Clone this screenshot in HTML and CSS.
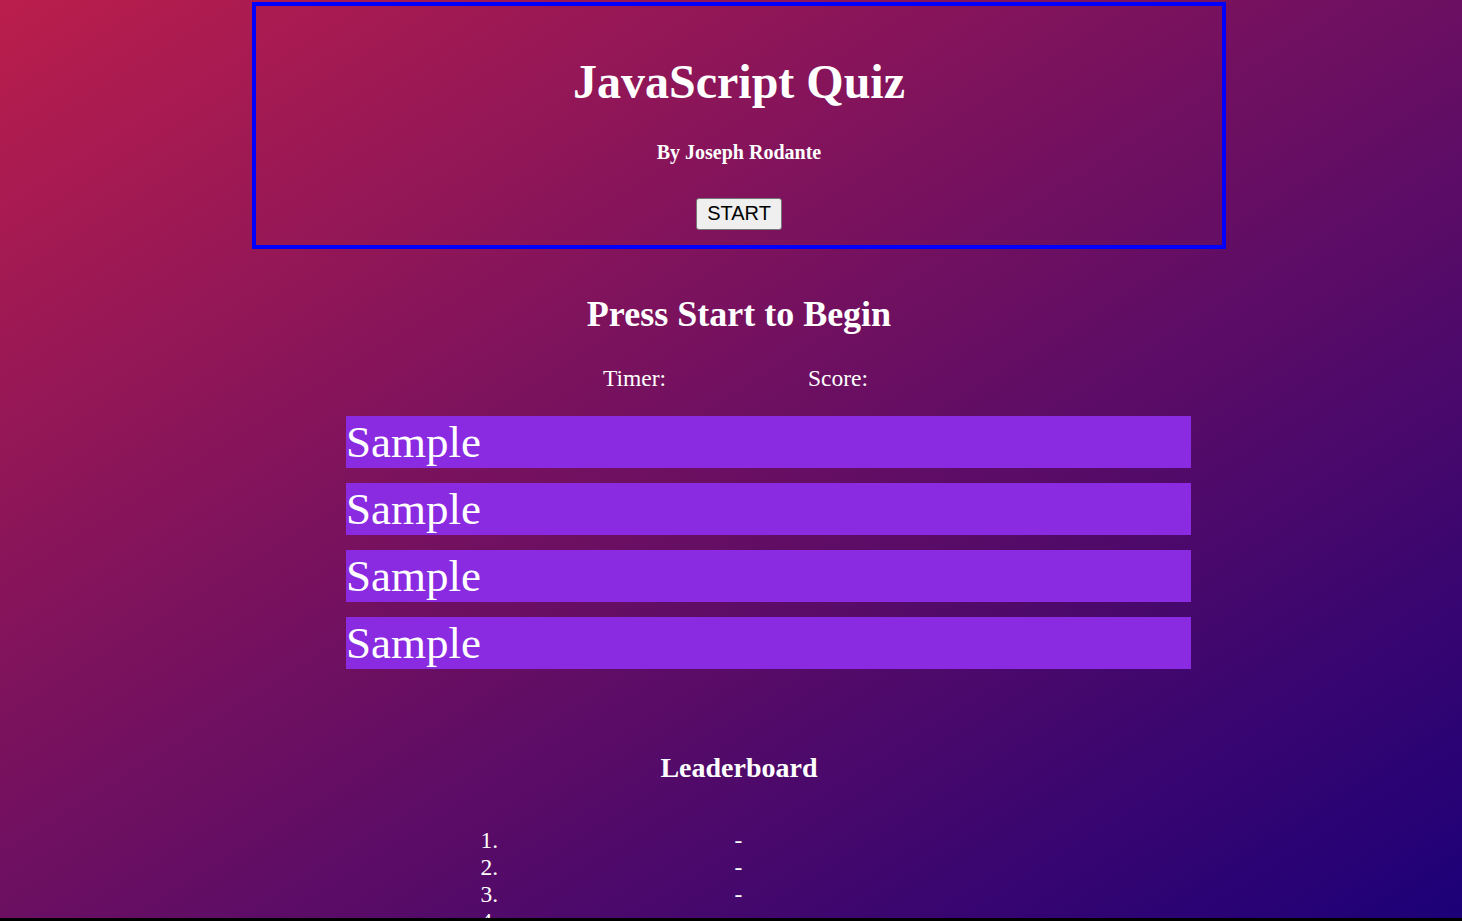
FILE: index.html
```html
<!DOCTYPE html>
<html lang="en">
<head>
<meta charset="utf-8">
<title>JavaScript Quiz</title>
<link rel="stylesheet" href="styles.css">
</head>
<body>
<div class="page">
  <header class="hero">
    <h1 class="hero-title">JavaScript Quiz</h1>
    <h4 class="hero-author">By Joseph Rodante</h4>
    <button class="start-btn" type="button">START</button>
  </header>

  <main class="quiz">
    <h2 class="quiz-question">Press Start to Begin</h2>
    <div class="stats">
      <span class="stat">Timer: <span class="stat-value"></span></span>
      <span class="stat">Score: <span class="stat-value"></span></span>
    </div>
    <div class="answers">
      <div class="answer">Sample</div>
      <div class="answer">Sample</div>
      <div class="answer">Sample</div>
      <div class="answer">Sample</div>
    </div>
  </main>

  <section class="board">
    <h3 class="board-title">Leaderboard</h3>
    <ol class="board-list">
      <li class="board-item"><span class="name"></span> - <span class="score"></span></li>
      <li class="board-item"><span class="name"></span> - <span class="score"></span></li>
      <li class="board-item"><span class="name"></span> - <span class="score"></span></li>
      <li class="board-item"><span class="name"></span> - <span class="score"></span></li>
      <li class="board-item"><span class="name"></span> - <span class="score"></span></li>
    </ol>
  </section>
</div>
<div class="bottom-edge"></div>
</body>
</html>
```

FILE: styles.css
```css
html {
  background: #000;
}

body {
  margin: 0;
  background: linear-gradient(to bottom right, #ba1e4c, #1c0078);
  color: #fff;
  font-family: "Liberation Serif", "Times New Roman", serif;
  font-size: 23.5px;
  overflow: hidden;
  height: 919px;
}

.page {
  padding: 2px 0 0 16px;
}

.hero {
  width: 966px;
  margin: 0 auto;
  border: 4px solid #0000ff;
  padding: 48px 0 15px;
  text-align: center;
}

.hero-title {
  margin: 0;
  font-size: 48px;
  font-weight: bold;
  line-height: normal;
}

.hero-author {
  margin: 32px 0 0;
  font-size: 20px;
  font-weight: bold;
  line-height: normal;
}

.start-btn {
  display: block;
  margin: 34px auto 0;
  font-family: "Liberation Sans", Arial, sans-serif;
  font-size: 20px;
  line-height: 23px;
  padding: 3px 10px 4px;
  color: #000;
  background: #efefef;
  border: 1px solid #767676;
  border-radius: 3px;
}

.quiz {
  text-align: center;
}

.quiz-question {
  margin: 44px 0 0;
  font-size: 36px;
  font-weight: bold;
  line-height: normal;
}

.stats {
  margin-top: 30px;
  display: flex;
  justify-content: center;
  gap: 142px;
  padding-right: 7px;
  line-height: normal;
}

.answers {
  margin: 24px 0 0 330px;
  width: 845px;
  display: flex;
  flex-direction: column;
  gap: 15px;
}

.answer {
  background: #8a2be2;
  font-size: 45px;
  height: 52px;
  line-height: 52px;
  text-align: left;
  color: #fff;
}

.board {
  text-align: center;
}

.board-title {
  margin: 83px 0 0;
  font-size: 28px;
  font-weight: bold;
  line-height: normal;
}

.board-list {
  margin: 43px 0 0 448px;
  padding-left: 40px;
  width: 469px;
  line-height: 27px;
}

.board-item {
  text-align: center;
}

.bottom-edge {
  position: fixed;
  left: 0;
  right: 0;
  bottom: 0;
  height: 3px;
  background: #000;
}
```
